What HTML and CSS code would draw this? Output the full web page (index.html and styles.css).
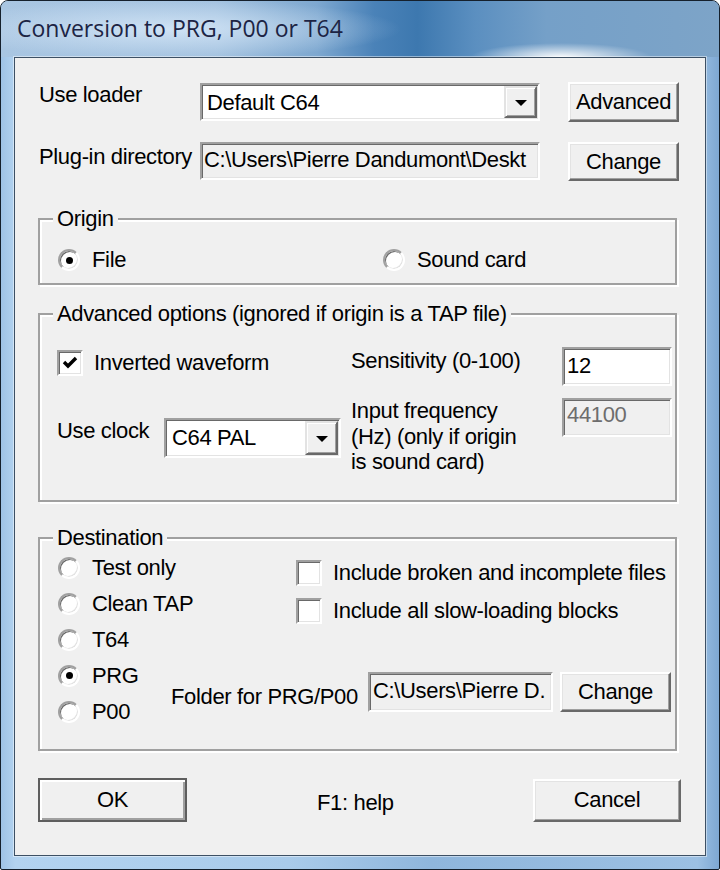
FILE: index.html
```html
<!DOCTYPE html>
<html lang="en">
<head>
<meta charset="utf-8">
<title>Conversion to PRG, P00 or T64</title>
<link rel="stylesheet" href="styles.css">
</head>
<body>
<div class="window">
  <div class="titlebar"><span class="title">Conversion to PRG, P00 or T64</span></div>
  <div class="client">
    <div class="toprow">
      <span class="lbl lbl-loader">Use loader</span>
      <div class="combo combo-loader">
        <span class="combo-text">Default C64</span>
        <span class="drop"><svg width="12" height="7" viewBox="0 0 12 7"><polygon points="0,0 12,0 6,6" fill="#000"/></svg></span>
      </div>
      <span class="spacer"></span>
      <button class="btn btn-top">Advanced</button>
    </div>
    <div class="toprow toprow-2">
      <span class="lbl lbl-plugin">Plug-in directory</span>
      <div class="field field-ro field-plugin"><span class="field-text">C:\Users\Pierre Dandumont\Deskt</span></div>
      <span class="spacer"></span>
      <button class="btn btn-top btn-top-2">Change</button>
    </div>

    <fieldset class="group group-origin">
      <legend>Origin</legend>
      <div class="origin-body">
        <div class="opt"><span class="radio checked"></span><span>File</span></div>
        <div class="opt"><span class="radio"></span><span>Sound card</span></div>
      </div>
    </fieldset>

    <fieldset class="group group-adv">
      <legend>Advanced options (ignored if origin is a TAP file)</legend>
      <div class="adv-body">
        <div class="opt opt-check">
          <span class="check"><svg width="16" height="14" viewBox="0 0 16 14"><polyline points="2,6 6,10 14,2" fill="none" stroke="#000" stroke-width="3.4"/></svg></span>
          <span>Inverted waveform</span>
        </div>
        <span class="lbl lbl-sens">Sensitivity (0-100)</span>
        <div class="field field-sens"><span class="field-text">12</span></div>

        <div class="clock-cell">
          <span class="lbl lbl-clock">Use clock</span>
          <div class="combo combo-clock">
            <span class="combo-text">C64 PAL</span>
            <span class="drop"><svg width="12" height="7" viewBox="0 0 12 7"><polygon points="0,0 12,0 6,6" fill="#000"/></svg></span>
          </div>
        </div>
        <span class="lbl lbl-freq">Input frequency<br>(Hz) (only if origin<br>is sound card)</span>
        <div class="field field-ro field-freq"><span class="field-text disabled">44100</span></div>
      </div>
    </fieldset>

    <fieldset class="group group-dest">
      <legend>Destination</legend>
      <div class="dest-body">
        <div class="radio-list">
          <div class="opt opt-dest"><span class="radio"></span><span>Test only</span></div>
          <div class="opt opt-dest"><span class="radio"></span><span>Clean TAP</span></div>
          <div class="opt opt-dest"><span class="radio"></span><span>T64</span></div>
          <div class="opt opt-dest"><span class="radio checked"></span><span>PRG</span></div>
          <div class="opt opt-dest"><span class="radio"></span><span>P00</span></div>
        </div>
        <div class="dest-right">
          <div class="opt opt-cb opt-cb-1"><span class="check"></span><span>Include broken and incomplete files</span></div>
          <div class="opt opt-cb opt-cb-2"><span class="check"></span><span>Include all slow-loading blocks</span></div>
          <div class="folder-row">
            <span class="lbl lbl-folder">Folder for PRG/P00</span>
            <div class="field field-ro field-folder"><span class="field-text">C:\Users\Pierre D.</span></div>
            <button class="btn btn-folder">Change</button>
          </div>
        </div>
      </div>
    </fieldset>

    <div class="bottom-row">
      <button class="btn btn-default btn-ok">OK</button>
      <span class="help">F1: help</span>
      <button class="btn btn-cancel">Cancel</button>
    </div>
  </div>
</div>
</body>
</html>
```

FILE: styles.css
```css
* { box-sizing: border-box; }

html, body {
  margin: 0;
  padding: 0;
  background: #ffffff;
}

body {
  font-family: "Liberation Sans", Arial, sans-serif;
  font-size: 22px;
  line-height: 24px;
  letter-spacing: -0.35px;
  color: #000;
}

.window {
  width: 720px;
  height: 870px;
  border: 1px solid #15202c;
  border-radius: 8px 8px 2px 2px;
  overflow: hidden;
  display: flex;
  flex-direction: column;
  background:
    linear-gradient(to right, #9fc3e6 0%, #b3d3f0 2%, #a9cbea 40%, #8fb6dc 60%, #9cc0e3 97%, #7ea8d3 100%);
}

.titlebar {
  height: 56px;
  flex: none;
  padding: 12px 0 0 16px;
  background:
    radial-gradient(ellipse 90px 14px at 560px 56px, rgba(255,255,255,0.95), rgba(255,255,255,0) 100%),
    radial-gradient(ellipse 230px 30px at 170px 28px, rgba(215,232,248,0.85), rgba(215,232,248,0) 100%),
    linear-gradient(to right, #a9c6e2 0%, #a2c1df 30%, #7ea8d0 44%, #4a82b8 52%, #3d78af 58%, #5b8fc0 66%, #75a0c8 76%, #7da4c8 100%);
}

.title {
  font-family: "Open Sans", "Noto Sans", sans-serif;
  font-size: 23px;
  line-height: 30px;
  letter-spacing: 0;
  color: #1c2444;
}

.client {
  flex: none;
  height: 799px;
  margin: 0 13px;
  background: #f0f0f0;
  border: 1px solid #3d5064;
  box-shadow: 0 0 0 1px rgba(255,255,255,0.45);
  padding: 24px 24px 0 23px;
}

/* ---------- top rows ---------- */
.toprow {
  display: grid;
  grid-template-columns: 162px 340px 28px 111px;
  align-items: start;
  height: 40px;
}

.toprow-2 {
  margin-top: 20px;
  height: 39px;
}

.lbl { white-space: nowrap; }

.lbl-loader { margin: 1px 0 0 1px; }
.lbl-plugin { margin: 3px 0 0 1px; }

/* ---------- sunken controls ---------- */
.combo,
.field {
  border: 2px solid;
  border-color: #a0a0a0 #ffffff #ffffff #a0a0a0;
  box-shadow: inset 1px 1px 0 #696969, inset -1px -1px 0 #e3e3e3;
  background: #ffffff;
  overflow: hidden;
  white-space: nowrap;
}

.combo {
  display: flex;
  align-items: stretch;
  padding: 1px;
}

.combo-loader {
  height: 38px;
  margin-top: 1px;
}

.combo-text {
  flex: 1;
  padding: 5px 0 0 4px;
  overflow: hidden;
}

.drop {
  width: 33px;
  flex: none;
  background: #f0f0f0;
  border: 2px solid;
  border-color: #e3e3e3 #696969 #696969 #e3e3e3;
  box-shadow: inset 1px 1px 0 #ffffff, inset -1px -1px 0 #a0a0a0;
  display: flex;
  align-items: center;
  justify-content: center;
  padding-top: 3px;
}

.drop svg { display: block; }

.field {
  padding: 4px 2px 0 2px;
}

.field-text {
  display: block;
  overflow: hidden;
  white-space: nowrap;
}

.field-ro { background: #f0f0f0; }

.field-plugin { height: 38px; }

.field-text.disabled { color: #6d6d6d; }

/* ---------- raised buttons ---------- */
.btn {
  font-family: "Liberation Sans", Arial, sans-serif;
  font-size: 22px;
  line-height: 24px;
  letter-spacing: -0.35px;
  color: #000;
  background: #f0f0f0;
  border: 2px solid;
  border-color: #ffffff #696969 #696969 #ffffff;
  box-shadow: inset -1px -1px 0 #a0a0a0, inset 1px 1px 0 #e3e3e3;
  padding: 0;
  margin: 0;
  text-align: center;
}

.btn-top { height: 40px; }
.btn-top-2 { height: 39px; }

/* ---------- group boxes ---------- */
.group {
  margin: 0;
  padding: 0;
  min-width: 0;
  width: 639px;
  border: 2px solid #a0a0a0;
  box-shadow: inset 2px 2px 0 #ffffff, 2px 2px 0 #ffffff;
}

.group legend {
  margin-left: 13px;
  padding: 0 4px;
  line-height: 24px;
  background: #f0f0f0;
}

.group-origin { margin-top: 26px; }
.group-adv { margin-top: 17px; }
.group-dest { margin-top: 24px; }

/* options */
.opt {
  display: flex;
  align-items: center;
  gap: 12px;
  white-space: nowrap;
}

.radio {
  width: 22px;
  height: 22px;
  flex: none;
  border-radius: 50%;
  background: #ffffff;
  border: 2px solid;
  border-color: #a0a0a0 #ffffff #ffffff #a0a0a0;
  box-shadow: inset 1px 1px 0 #696969, inset -1px -1px 0 #e3e3e3;
  display: flex;
  align-items: center;
  justify-content: center;
}

.radio.checked::after {
  content: "";
  width: 7px;
  height: 7px;
  border-radius: 50%;
  background: #000;
}

.check {
  width: 26px;
  height: 26px;
  flex: none;
  background: #ffffff;
  border: 2px solid;
  border-color: #a0a0a0 #ffffff #ffffff #a0a0a0;
  box-shadow: inset 1px 1px 0 #696969, inset -1px -1px 0 #e3e3e3;
  display: flex;
  align-items: center;
  justify-content: center;
}

.check svg { display: block; }

/* origin */
.origin-body {
  display: grid;
  grid-template-columns: 325px 1fr;
  padding: 17px 0 13px 18px;
  box-sizing: content-box;
  height: 22px;
}

/* advanced */
.adv-body {
  display: grid;
  grid-template-columns: 294px 211px 110px;
  row-gap: 12px;
  align-items: start;
  padding: 21px 0 25px 17px;
}

.opt-check { margin-top: 3px; gap: 11px; }

.lbl-sens { margin-top: 2px; }

.field-sens {
  height: 39px;
  padding: 5px 2px 0 3px;
}

.clock-cell {
  display: flex;
  align-items: flex-start;
}

.lbl-clock {
  width: 107px;
  margin-top: 21px;
}

.combo-clock {
  width: 177px;
  height: 40px;
  margin-top: 20px;
}

.combo-clock .combo-text { padding-left: 5px; }

.lbl-freq {
  line-height: 25.5px;
  white-space: nowrap;
}

.field-freq {
  height: 39px;
  padding: 3px 2px 0 3px;
}

/* destination */
.dest-body {
  display: grid;
  grid-template-columns: 114px 1fr;
  padding: 0 0 19px 17px;
}

.radio-list {
  display: flex;
  flex-direction: column;
}

.opt-dest {
  height: 36px;
  padding-left: 1px;
}

.dest-right {
  display: flex;
  flex-direction: column;
}

.opt-cb {
  margin-left: 125px;
  height: 26px;
  gap: 11px;
}

.opt-cb-1 { margin-top: 10px; }
.opt-cb-2 { margin-top: 12px; }

.folder-row {
  display: flex;
  align-items: flex-start;
  margin-top: 48px;
}

.lbl-folder {
  width: 197px;
  margin-top: 13px;
}

.field-folder {
  width: 185px;
  height: 40px;
  padding: 5px 2px 0 3px;
}

.btn-folder {
  width: 111px;
  height: 40px;
  margin-left: 7px;
}

/* bottom */
.bottom-row {
  display: flex;
  align-items: flex-start;
  width: 643px;
  margin-top: 27px;
}

.btn-ok {
  width: 149px;
  height: 44px;
}

.btn-default {
  border: 2px solid #5e5e5e;
  box-shadow: inset 2px 2px 0 #ffffff, inset -2px -2px 0 #a0a0a0;
}

.help {
  margin: 13px 0 0 130px;
  white-space: nowrap;
}

.btn-cancel {
  width: 148px;
  height: 43px;
  margin: 1px 0 0 auto;
}
```
